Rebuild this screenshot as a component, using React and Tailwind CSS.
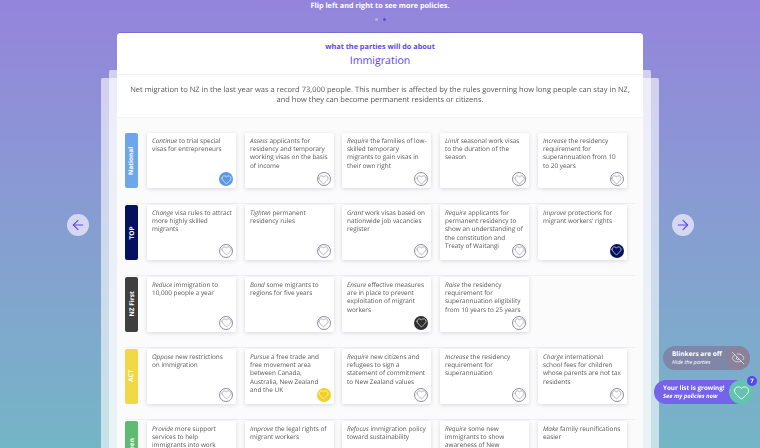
import { Heart, EyeOff, ArrowLeft, ArrowRight } from "lucide-react";

const SANS = "font-['Open_Sans','Noto_Sans',sans-serif]";

const ROWS = [
  {
    party: "National",
    color: "bg-[#6ea6ea]",
    picked: "bg-[#5b97e2]",
    policies: [
      { verb: "Continue", text: " to trial special visas for entrepreneurs", on: true },
      { verb: "Assess", text: " applicants for residency and temporary working visas on the basis of income" },
      { verb: "Require", text: " the families of low-skilled temporary\nmigrants to gain visas in their own right" },
      { verb: "Limit", text: " seasonal work visas to the duration of the season" },
      { verb: "Increase", text: " the residency requirement for superannuation from 10 to 20 years" },
    ],
  },
  {
    party: "TOP",
    color: "bg-[#04125e]",
    picked: "bg-[#04125e]",
    policies: [
      { verb: "Change", text: " visa rules to attract more highly skilled migrants" },
      { verb: "Tighten", text: " permanent residency rules" },
      { verb: "Grant", text: " work visas based on nationwide job vacancies register" },
      { verb: "Require", text: " applicants for permanent residency to show an understanding of the constitution and Treaty of Waitangi" },
      { verb: "Improve", text: " protections for migrant workers' rights", on: true },
    ],
  },
  {
    party: "NZ First",
    color: "bg-[#3f3f3f]",
    picked: "bg-[#2f2f2f]",
    policies: [
      { verb: "Reduce", text: " immigration to 10,000 people a year" },
      { verb: "Bond", text: " some migrants to regions for five years" },
      { verb: "Ensure", text: " effective measures are in place to prevent exploitation of migrant workers", on: true },
      { verb: "Raise", text: " the residency requirement for superannuation eligibility from 10 years to 25 years" },
    ],
  },
  {
    party: "ACT",
    color: "bg-[#f0d846]",
    picked: "bg-[#f2d022]",
    policies: [
      { verb: "Oppose", text: " new restrictions on immigration" },
      { verb: "Pursue", text: " a free trade and free movement area between Canada, Australia, New Zealand and the UK", on: true },
      { verb: "Require", text: " new citizens and refugees to sign a statement of commitment to New Zealand values" },
      { verb: "Increase", text: " the residency requirement for superannuation" },
      { verb: "Charge", text: " international school fees for children whose parents are not tax residents" },
    ],
  },
  {
    party: "Green",
    color: "bg-[#5fbb70]",
    picked: "bg-[#5fbb70]",
    policies: [
      { verb: "Provide", text: " more support services to help immigrants into work" },
      { verb: "Improve", text: " the legal rights of migrant workers" },
      { verb: "Refocus", text: " immigration policy toward sustainability" },
      { verb: "Require", text: " some new immigrants to show awareness of New" },
      { verb: "Make", text: " family reunifications easier" },
    ],
  },
];

function LikeButton({ on, picked }) {
  return (
    <span
      className={`absolute right-[3px] bottom-[2px] w-[14px] h-[14px] rounded-full flex items-center justify-center ${
        on ? picked : "bg-white border border-[#8f8a9c]"
      }`}
    >
      <Heart size={11} strokeWidth={1.4} className={on ? "text-white" : "text-[#8f8a9c]"} />
    </span>
  );
}

function PolicyCard({ policy, picked }) {
  return (
    <div className="relative w-[89px] h-[55px] shrink-0 bg-white rounded-[2px] shadow-[0_1px_4px_rgba(60,60,90,0.18)] pl-[5px] pr-[4px] pt-[4px] text-[6.4px] leading-[8.2px] text-[#555]">
      <p className="whitespace-pre-line [will-change:transform]">
        <em>{policy.verb}</em>
        {policy.text}
      </p>
      <LikeButton on={policy.on} picked={picked} />
    </div>
  );
}

function PartyRow({ row }) {
  return (
    <div className="flex items-start h-[71.9px] border-b border-[#eef0f3] pt-[1px] mx-[8px]">
      <div
        className={`w-[13px] h-[55px] rounded-[2px] shrink-0 flex items-center justify-center ${row.color}`}
      >
        <span className="block -rotate-90 whitespace-nowrap text-white text-[6.5px] font-bold">
          {row.party}
        </span>
      </div>
      <div className="flex gap-[8.7px] ml-[9px]">
        {row.policies.map((p) => (
          <PolicyCard key={p.verb + p.text} policy={p} picked={row.picked} />
        ))}
      </div>
    </div>
  );
}

function RoundArrow({ Icon }) {
  return (
    <div className="w-[22px] h-[22px] rounded-full bg-[#d5d8f0] flex items-center justify-center">
      <Icon size={16} strokeWidth={1.6} className="text-[#5b46ea]" />
    </div>
  );
}

export default function App() {
  return (
    <div
      className={`relative w-[760px] h-[448px] overflow-hidden bg-gradient-to-b from-[#9484dc] to-[#74b5c6] [text-rendering:geometricPrecision] ${SANS}`}
    >
      <p className="pt-[1px] text-center text-[7.3px] leading-[11px] font-bold text-white">
        Flip left and right to see more policies.
      </p>
      <div className="flex justify-center gap-[5px] mt-[6px] h-[3px]">
        <span className="w-[3px] h-[3px] rounded-full bg-[#b5aee8]" />
        <span className="w-[3px] h-[3px] rounded-full bg-[#5b46ea]" />
      </div>

      {/* stacked sheets behind the page */}
      <div className="absolute left-[101px] top-[78px] w-[558px] h-[400px] bg-white/60 rounded-t-[2px]" />
      <div className="absolute left-[109px] top-[70px] w-[542px] h-[400px] bg-white/60 rounded-t-[2px]" />

      <div className="absolute left-[117px] top-[33px] w-[526px] h-[440px] bg-[#fbfbfc] rounded-t-[4px] shadow-[0_-1px_0_#7a6fd4]">
        <div className="h-[42px] bg-white border-b border-[#f1f1f4] pt-[9px] text-center rounded-t-[4px]">
          <p className="text-[7.3px] leading-[10px] font-bold text-[#6644f0]">what the parties will do about</p>
          <p className="text-[10.6px] leading-[14px] mt-[2px] font-medium text-[#5b3ff0]">Immigration</p>
        </div>
        <div className="h-[43px] bg-white border-b border-[#f4f4f6] pt-[10px] px-[10px] text-center text-[7.52px] leading-[10px] text-[#555]">
          <p className="[will-change:transform]">
            Net migration to NZ in the last year was a record 73,000 people. This number is affected by the rules governing how long people can stay in NZ, and how they can become permanent residents or citizens.
          </p>
        </div>
        <div className="pt-[14px]">
          {ROWS.map((row) => (
            <PartyRow key={row.party} row={row} />
          ))}
        </div>
      </div>

      <div className="absolute left-[67px] top-[214px]">
        <RoundArrow Icon={ArrowLeft} />
      </div>
      <div className="absolute left-[672px] top-[214px]">
        <RoundArrow Icon={ArrowRight} />
      </div>

      <div className="absolute left-[663px] top-[346px] w-[87px] h-[24px] rounded-full bg-[#7f86a8] flex items-center justify-between">
        <div className="pl-[9px] text-white">
          <p className="text-[6.5px] leading-[9px] font-bold">Blinkers are off</p>
          <p className="text-[5.5px] leading-[9px] italic">Hide the parties</p>
        </div>
        <span className="w-[24px] h-[24px] rounded-full bg-[#8a8298] flex items-center justify-center">
          <EyeOff size={14} strokeWidth={1} className="text-white" />
        </span>
      </div>

      <div className="absolute left-[654px] top-[380px] w-[93px] h-[24px] rounded-full bg-[#7563ea] flex items-center">
        <div className="pl-[9px] text-white">
          <p className="text-[6.3px] leading-[9px] font-bold">Your list is growing!</p>
          <p className="text-[5.8px] leading-[9px] italic font-bold">See my policies now</p>
        </div>
      </div>
      <span className="absolute left-[729px] top-[380px] w-[24px] h-[24px] rounded-full bg-[#63c3ae] flex items-center justify-center">
        <Heart size={17} strokeWidth={1.2} className="text-white" />
      </span>
      <span className="absolute left-[747px] top-[376px] w-[10px] h-[10px] rounded-full bg-[#5b46ea] text-white text-[6px] leading-[10px] font-bold text-center">
        7
      </span>
    </div>
  );
}
